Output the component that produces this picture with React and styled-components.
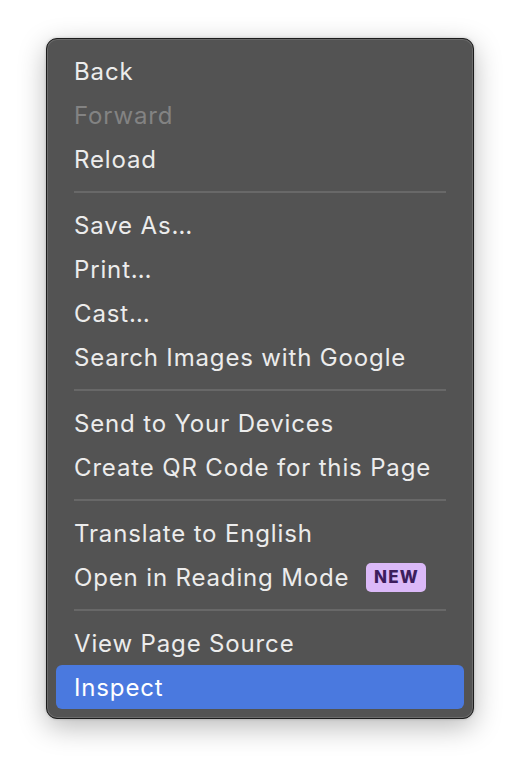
import React from "react";
import styled, { createGlobalStyle } from "styled-components";

const GlobalStyle = createGlobalStyle`
  html, body {
    margin: 0;
    background: #ffffff;
  }
  body {
    font-family: Inter, "Noto Sans", "Liberation Sans", sans-serif;
    -webkit-font-smoothing: antialiased;
  }
`;

const Page = styled.div`
  width: 520px;
  height: 772px;
  padding-top: 38px;
  box-sizing: border-box;
  display: flex;
  justify-content: center;
  align-items: flex-start;
`;

const Menu = styled.div`
  width: 428px;
  box-sizing: border-box;
  padding: 10px 9px 9px 9px;
  background: #535353;
  border: 1px solid #1c1c1c;
  border-radius: 11px;
  box-shadow: inset 0 0 0 1px #6b6b6b, 0 8px 28px rgba(0, 0, 0, 0.28),
    0 0 3px rgba(0, 0, 0, 0.2);
  display: flex;
  flex-direction: column;
`;

const Item = styled.div`
  height: 44px;
  display: flex;
  align-items: center;
  gap: 17px;
  padding: 0 18px;
  border-radius: 6px;
  font-size: 24px;
  letter-spacing: 0.85px;
  color: ${(p) => (p.disabled ? "#838383" : "#ececec")};
  background: ${(p) => (p.active ? "#4a79df" : "transparent")};
  ${(p) => p.active && "color: #ffffff;"}
`;

const Separator = styled.div`
  height: 2px;
  margin: 10px 18px;
  background: #686868;
`;

const Badge = styled.span`
  display: inline-flex;
  align-items: center;
  justify-content: center;
  width: 60px;
  height: 29px;
  border-radius: 5px;
  background: #dbb9f8;
  color: #3c1d5c;
  font-size: 17px;
  font-weight: 800;
  letter-spacing: 1.2px;
`;

const groups = [
  [{ label: "Back" }, { label: "Forward", disabled: true }, { label: "Reload" }],
  [
    { label: "Save As…" },
    { label: "Print…" },
    { label: "Cast…" },
    { label: "Search Images with Google" },
  ],
  [{ label: "Send to Your Devices" }, { label: "Create QR Code for this Page" }],
  [{ label: "Translate to English" }, { label: "Open in Reading Mode", badge: "NEW" }],
  [{ label: "View Page Source" }, { label: "Inspect", active: true }],
];

const App = () => (
  <>
    <GlobalStyle />
    <Page>
      <Menu>
        {groups.map((group, gi) => (
          <React.Fragment key={gi}>
            {gi > 0 && <Separator />}
            {group.map((item) => (
              <Item key={item.label} disabled={item.disabled} active={item.active}>
                {item.label}
                {item.badge && <Badge>{item.badge}</Badge>}
              </Item>
            ))}
          </React.Fragment>
        ))}
      </Menu>
    </Page>
  </>
);

export default App;
